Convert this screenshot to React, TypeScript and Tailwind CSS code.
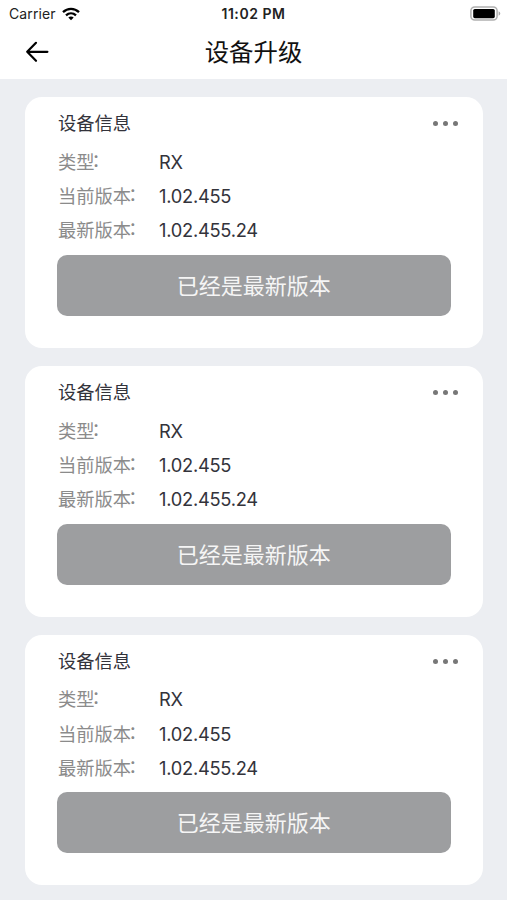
type Device = {
  id: number;
  type: string;
  current: string;
  latest: string;
};

const devices: Device[] = [
  { id: 1, type: 'RX', current: '1.02.455', latest: '1.02.455.24' },
  { id: 2, type: 'RX', current: '1.02.455', latest: '1.02.455.24' },
  { id: 3, type: 'RX', current: '1.02.455', latest: '1.02.455.24' },
];

function StatusBar() {
  return (
    <div className="grid h-[27px] grid-cols-[1fr_auto_1fr] items-center pr-[6px] pl-[9px] text-[14px] leading-none text-[#222]">
      <div className="flex items-center gap-[6px]">
        <span className="tracking-[0.1px]">Carrier</span>
        <svg className="h-[14px] w-[18px]" viewBox="0 0 18 14" fill="none" stroke="#000" strokeWidth="2.3">
          <path d="M1 5.2C5.6 0.8 12.4 0.8 17 5.2" />
          <path d="M4 8.4C6.9 5.7 11.1 5.7 14 8.4" />
          <path d="M9 13.3L6.3 10.6C7.8 9.2 10.2 9.2 11.7 10.6Z" fill="#000" stroke="none" />
        </svg>
      </div>
      <span className="-ml-[3px] pt-px text-[14px] font-semibold tracking-[0.55px] whitespace-nowrap">11:02 PM</span>
      <svg className="h-[15px] w-[31px] justify-self-end" viewBox="0 0 31 15">
        <rect x="0.9" y="1" width="26.2" height="13" rx="3.8" fill="#fff" stroke="#b0b0b0" strokeWidth="1.5" />
        <rect x="3.2" y="3" width="21.6" height="9.2" rx="1.6" fill="#000" />
        <path d="M28.6 5.2C30.9 6.4 30.9 8.6 28.6 9.8Z" fill="#aaa" />
      </svg>
    </div>
  );
}

function Header() {
  return (
    <header className="grid h-[52px] grid-cols-[1fr_auto_1fr] items-center px-[25px] pb-[2px]">
      <button aria-label="返回">
        <svg
          className="h-[22px] w-[24px]"
          viewBox="0 0 24 22"
          fill="none"
          stroke="#000"
          strokeWidth="2.2"
          strokeLinecap="round"
          strokeLinejoin="round"
        >
          <path d="M11 1.8L2.2 10.8L11 19.8M2.2 10.8H22.4" />
        </svg>
      </button>
      <h1 className="pt-px text-[24.4px] leading-none text-[#111]">设备升级</h1>
    </header>
  );
}

function Row({ label, value }: { label: string; value: string }) {
  return (
    <div className="flex h-[34.2px] items-center">
      <dt className="flex w-[101px] text-[#8b8b8b]">
        {label}
        <span className="-mt-[2px] -ml-[3px]">：</span>
      </dt>
      <dd className="tracking-[-0.25px] text-[#33333b]">{value}</dd>
    </div>
  );
}

function DeviceCard({ device }: { device: Device }) {
  return (
    <section className="h-[250.5px] rounded-[17px] bg-white pt-[7px] pr-[32px] pl-[32px] text-[18.3px] leading-none">
      <div className="-mr-[7px] flex h-[40.5px] items-center justify-between pb-[2px] pl-[1px]">
        <h2 className="text-[#33333b]">设备信息</h2>
        <button className="flex gap-[5px]" aria-label="更多">
          <span className="size-[5px] rounded-full bg-[#777]" />
          <span className="size-[5px] rounded-full bg-[#777]" />
          <span className="size-[5px] rounded-full bg-[#777]" />
        </button>
      </div>
      <dl className="pl-[1px]">
        <Row label="类型" value={device.type} />
        <Row label="当前版本" value={device.current} />
        <Row label="最新版本" value={device.latest} />
      </dl>
      <button className="mt-[7.5px] h-[61px] w-full rounded-[10px] bg-[#9d9ea0] pt-px text-[22px] text-[#f5f5f5]">
        已经是最新版本
      </button>
    </section>
  );
}

export default function App() {
  return (
    <div className="h-screen overflow-hidden bg-[#eceef2] font-['Inter','Noto_Sans_CJK_SC',sans-serif]">
      <div className="bg-white">
        <StatusBar />
        <Header />
      </div>
      <main className="flex flex-col gap-[18.3px] pt-[18.3px] pr-[24.5px] pl-[25px]">
        {devices.map((device) => (
          <DeviceCard key={device.id} device={device} />
        ))}
      </main>
    </div>
  );
}
